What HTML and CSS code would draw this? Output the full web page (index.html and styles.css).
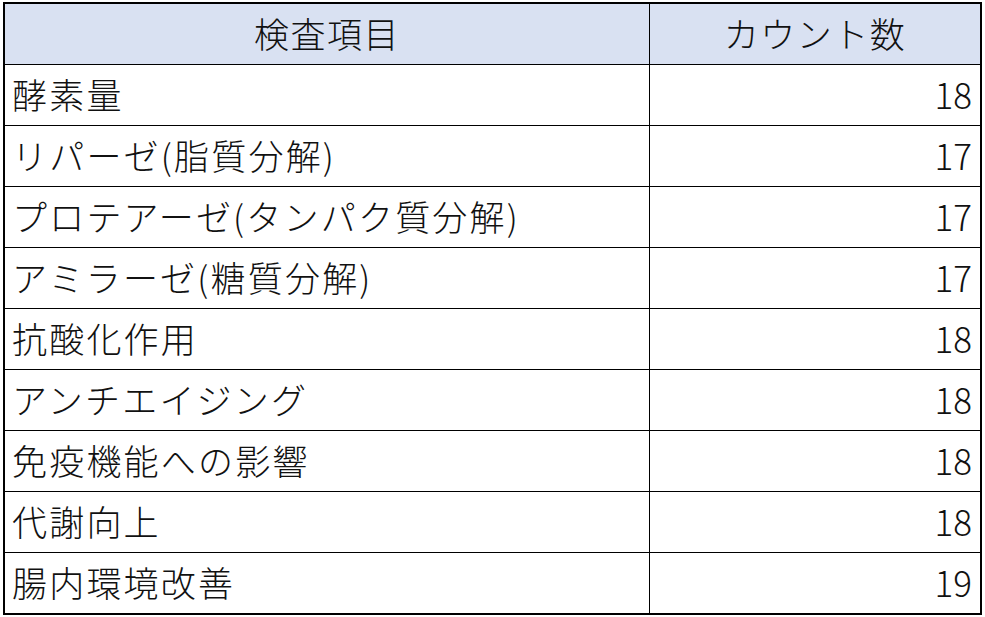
FILE: index.html
```html
<!DOCTYPE html>
<html lang="ja">
<head>
<meta charset="utf-8">
<link rel="stylesheet" href="styles.css">
</head>
<body>
<table class="sheet">
  <thead>
    <tr><th class="c-item">検査項目</th><th class="c-count">カウント数</th></tr>
  </thead>
  <tbody>
    <tr><td class="c-item">酵素量</td><td class="c-count">18</td></tr>
    <tr><td class="c-item">リパーゼ(脂質分解)</td><td class="c-count">17</td></tr>
    <tr><td class="c-item">プロテアーゼ(タンパク質分解)</td><td class="c-count">17</td></tr>
    <tr><td class="c-item">アミラーゼ(糖質分解)</td><td class="c-count">17</td></tr>
    <tr><td class="c-item">抗酸化作用</td><td class="c-count">18</td></tr>
    <tr><td class="c-item">アンチエイジング</td><td class="c-count">18</td></tr>
    <tr><td class="c-item">免疫機能への影響</td><td class="c-count">18</td></tr>
    <tr><td class="c-item">代謝向上</td><td class="c-count">18</td></tr>
    <tr><td class="c-item">腸内環境改善</td><td class="c-count">19</td></tr>
  </tbody>
</table>
</body>
</html>
```
FILE: styles.css
```css
html, body {
  margin: 0;
  padding: 0;
  background: #ffffff;
}
body {
  padding: 2px 0 0 3px;
  font-family: "Noto Sans CJK JP", "Noto Sans", sans-serif;
  color: #111111;
}
.sheet {
  border-collapse: collapse;
  border: 2px solid #000000;
  width: 979px;
  table-layout: fixed;
}
.sheet th,
.sheet td {
  border: 1px solid #000000;
  height: 56px;
  padding: 0 8px 4px;
  font-size: 35px;
  font-weight: 300;
  line-height: 1;
  vertical-align: middle;
  white-space: nowrap;
  overflow: hidden;
}
.sheet th {
  background: #d9e1f2;
  text-align: center;
  letter-spacing: 1.5px;
}
.sheet td.c-item {
  text-align: left;
  padding-left: 7px;
  letter-spacing: 2.2px;
}
.sheet td.c-count {
  text-align: right;
}
.sheet .c-item {
  width: 628px;
}
```
